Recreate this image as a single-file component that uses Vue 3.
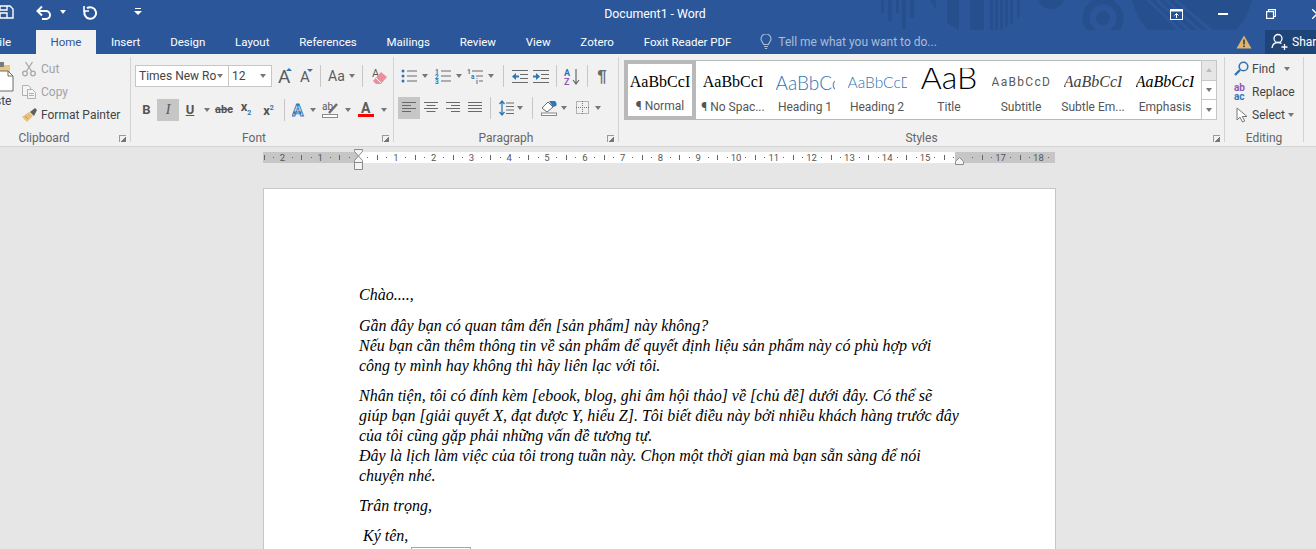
<script setup>
const tabs = ['Insert', 'Design', 'Layout', 'References', 'Mailings', 'Review', 'View', 'Zotero', 'Foxit Reader PDF'];

const gallery = [
  { cls: 's-normal', sample: 'AaBbCcI', label: '¶ Normal' },
  { cls: 's-normal', sample: 'AaBbCcI', label: '¶ No Spac...' },
  { cls: 's-h1', sample: 'AaBbCc', label: 'Heading 1' },
  { cls: 's-h2', sample: 'AaBbCcD', label: 'Heading 2' },
  { cls: 's-title', sample: 'AaB', label: 'Title' },
  { cls: 's-sub', sample: 'AaBbCcD', label: 'Subtitle' },
  { cls: 's-subtle', sample: 'AaBbCcI', label: 'Subtle Em...' },
  { cls: 's-emph', sample: 'AaBbCcI', label: 'Emphasis' },
];

const stripes = [130, 135, 140, 145, 150, 157];

const CM = 37.8;
const ZERO = 95; // ruler zero, from the ruler's left edge
const rulerNums = [];
const rulerTicks = [];
const rulerDots = [];
for (let n = -2; n <= 18; n++) {
  if (n !== 0 && n !== 16) rulerNums.push({ n: Math.abs(n), x: ZERO + n * CM });
}
for (let q = -10; q <= 74; q++) {
  if (q % 4 === 0) continue;
  const x = ZERO + (q * CM) / 4;
  if (x < 0 || x > 790) continue;
  if (q % 2 === 0) rulerTicks.push(x);
  else rulerDots.push(x);
}
</script>

<template>
  <div class="word">
    <div class="titlebar">
      <svg class="pattern" width="400" height="54" viewBox="0 0 400 54" fill="none">
        <defs>
          <clipPath id="arc"><circle cx="120" cy="-20" r="54" /></clipPath>
          <clipPath id="inner"><circle cx="332" cy="-12" r="47" /></clipPath>
        </defs>
        <g fill="#264f8d">
          <rect x="21" y="0" width="3" height="13" />
          <rect x="28" y="0" width="4" height="21" />
          <rect x="36" y="0" width="3" height="13" />
          <rect x="42" y="0" width="4" height="29" />
          <rect x="50" y="0" width="4" height="18" />
          <path d="M70 0h6v10z" />
          <g clip-path="url(#arc)">
            <rect x="87" y="0" width="12" height="40" />
            <rect x="110" y="0" width="14" height="40" />
            <rect v-for="x in stripes" :key="x" :x="x" y="0" width="3" height="40" />
          </g>
          <circle cx="191" cy="-5" r="14" />
          <circle cx="243" cy="18" r="7" />
          <circle cx="332" cy="-12" r="61" />
        </g>
        <circle cx="243" cy="18" r="17" stroke="#264f8d" stroke-width="7" />
        <g clip-path="url(#inner)" stroke="#2b579a" stroke-width="3">
          <path d="M288 0l40 38M297 0l40 38M306 0l40 36M315 0l38 32" />
        </g>
      </svg>
      <div class="qat">
        <svg class="q-save" width="14" height="14" viewBox="0 0 14 14" fill="none" stroke="#fff" stroke-width="1.4"><path d="M-6 1h16l3 3v9H-6zM7 1v4H0V1M7 13V8H0v5" /></svg>
        <svg class="q-undo" width="16" height="15" viewBox="0 0 16 15" fill="none" stroke="#fff" stroke-width="2"><path d="M2 6h8a4 4 0 0 1 0 8H6" /><path d="M6 1.500 1.500 6 6 10.500" /></svg>
        <i class="arrow white q-undo-arrow"></i>
        <svg class="q-redo" width="14" height="15" viewBox="0 0 14 15" fill="none" stroke="#fff" stroke-width="2"><path d="M4 3.200a5.800 5.800 0 1 1-2 2.300" /><path d="M1 1v5h5" stroke-width="1.600" /></svg>
        <svg class="q-more" width="8" height="8" viewBox="0 0 8 8" fill="#fff"><rect x="1" y="0" width="6" height="1" /><path d="M0 3h8L4 7z" /></svg>
      </div>
      <div class="doc-title">Document1 - Word</div>
      <div class="win-btns">
        <svg width="13" height="11" viewBox="0 0 13 11" fill="none" stroke="#fff"><rect x="0.500" y="0.500" width="12" height="10" /><rect x="0" y="0" width="13" height="2.500" fill="#fff" stroke="none" /><path d="M6.500 9V4.500M4.500 6.500l2-2 2 2" /></svg>
        <svg class="w-min" width="10" height="2" viewBox="0 0 10 2"><rect width="10" height="2" fill="#fff" /></svg>
        <svg class="w-max" width="10" height="10" viewBox="0 0 10 10" fill="none" stroke="#fff" stroke-width="1.200"><path d="M2.500 2.500V.6h6.900v6.900H7.500" /><rect x="0.600" y="2.600" width="6.900" height="6.800" /></svg>
        <svg class="w-close" width="10" height="10" viewBox="0 0 10 10" stroke="#fff" stroke-width="1.300"><path d="M0 0l10 10M10 0L0 10" /></svg>
      </div>
    </div>

    <div class="tabrow">
      <div class="tab file">File</div>
      <div class="tab active">Home</div>
      <div v-for="t in tabs" :key="t" class="tab">{{ t }}</div>
      <div class="tell">
        <svg width="12" height="16" viewBox="0 0 12 16" fill="none" stroke="#a9bcd8" stroke-width="1.100"><path d="M3.500 10.500C3.500 8.500 1 7.500 1 5a5 5 0 0 1 10 0c0 2.500-2.500 3.500-2.500 5.500zM4 12.500h4M4.800 14.500h2.400" /></svg>
        <span>Tell me what you want to do...</span>
      </div>
      <svg class="warn" width="16" height="14" viewBox="0 0 16 14"><path d="M8 0.500 15.500 13.500H.5z" fill="#e0b469" /><rect x="7.200" y="4.500" width="1.600" height="5" fill="#3c3c3c" /><rect x="7.200" y="10.500" width="1.600" height="1.600" fill="#3c3c3c" /></svg>
      <div class="share">
        <svg width="18" height="18" viewBox="0 0 18 18" fill="none" stroke="#fff" stroke-width="1.300"><circle cx="7" cy="5.500" r="4" /><path d="M1 15c.5-4 3-5.500 6-5.500 1.500 0 2.500.3 3.500 1" /><path d="M13.500 11v6M10.500 14h6" /></svg>
        <span>Share</span>
      </div>
    </div>

    <div class="ribbon">
      <section class="group g-clip">
        <div class="paste">
          <svg width="14" height="31" viewBox="0 0 14 31"><rect x="-6" y="3" width="16" height="9" fill="#e8c582" /><rect x="-2" y="0" width="6" height="5" fill="#7a7a7a" /><path d="M-4 9h12l5 5v15H-4z" fill="#fff" stroke="#6d6d6d" /><path d="M8 9v5h5" fill="none" stroke="#6d6d6d" /></svg>
          <span>ste</span>
        </div>
        <div class="clip-list">
          <div class="clip-item off">
            <svg width="14" height="16" viewBox="0 0 14 16" fill="none" stroke="#a8a8a8" stroke-width="1.300"><circle cx="3" cy="12.500" r="2.300" /><circle cx="11" cy="12.500" r="2.300" /><path d="M4.200 10.500 10.500 1M9.800 10.500 3.500 1" /></svg>
            <span>Cut</span>
          </div>
          <div class="clip-item off">
            <svg width="14" height="14" viewBox="0 0 14 14" fill="#f4f4f4" stroke="#b0b0b0"><path d="M.5.500h6l2 2v8h-8z" /><path d="M5.500 4.500h5l3 3v6h-8z" /><path d="M7 8.500h5M7 10.500h5" /></svg>
            <span>Copy</span>
          </div>
          <div class="clip-item painter">
            <svg width="16" height="14" viewBox="0 0 16 14"><path d="M0 9 7 4l4 4-6 6z" fill="#e7c17c" /><path d="M8 4l5-4 2 2-3 6z" fill="#5f5f5f" /><path d="M3 8l3 3" stroke="#c89b4e" /></svg>
            <span>Format Painter</span>
          </div>
        </div>
        <div class="group-name">Clipboard</div>
        <i class="launcher"></i>
      </section>

      <section class="group g-font">
        <div class="font-row1">
          <div class="combo"><span>Times New Ro</span><i class="arrow"></i></div>
          <div class="combo font-size"><span>12</span><i class="arrow"></i></div>
          <svg width="14" height="16" viewBox="0 0 14 16"><text x="0" y="15" class="glyph big">A</text><path d="M8 3h6l-3-3z" fill="#2f76b5" /></svg>
          <svg width="13" height="14" viewBox="0 0 13 14"><text x="0" y="13" class="glyph mid">A</text><path d="M7 0h6l-3 3z" fill="#2f76b5" /></svg>
          <b class="sep"></b>
          <div class="aa"><span>Aa</span><i class="arrow"></i></div>
          <b class="sep"></b>
          <svg width="15" height="16" viewBox="0 0 15 16"><text x="0" y="9" class="glyph small">A</text><path d="M1 13l8-9 6 5-6 7H4z" fill="#ee8d9c" /><path d="M4 10l5 5" stroke="#fff" /></svg>
        </div>
        <div class="font-row2">
          <span class="fmt bold">B</span>
          <span class="fmt ital on">I</span>
          <span class="fmt under">U</span>
          <i class="arrow"></i>
          <span class="fmt strike">abc</span>
          <span class="fmt script">x<sub>2</sub></span>
          <span class="fmt script">x<sup>2</sup></span>
          <b class="sep"></b>
          <svg width="14" height="16" viewBox="0 0 14 16"><text x="0" y="14" class="glyph effect">A</text></svg>
          <i class="arrow"></i>
          <svg width="17" height="16" viewBox="0 0 17 16" fill="none"><text x="0" y="8" class="glyph tiny">ab</text><path d="M7 11 15 2" stroke="#6d6d6d" stroke-width="2.500" /><rect x="0.500" y="12.500" width="15" height="3" stroke="#8a8a8a" fill="#fff" /></svg>
          <i class="arrow"></i>
          <svg width="16" height="16" viewBox="0 0 16 16"><text x="3" y="11" class="glyph color">A</text><rect x="0" y="12" width="16" height="3" fill="#f00" /></svg>
          <i class="arrow"></i>
        </div>
        <div class="group-name">Font</div>
        <i class="launcher"></i>
      </section>

      <section class="group g-para">
        <div class="para-row1">
          <svg width="16" height="14" viewBox="0 0 16 14"><g fill="#2f76b5"><circle cx="2" cy="2" r="1.500" /><circle cx="2" cy="7" r="1.500" /><circle cx="2" cy="12" r="1.500" /></g><path d="M6 2h10M6 7h10M6 12h10" stroke="#6a6a6a" /></svg>
          <i class="arrow"></i>
          <svg width="16" height="15" viewBox="0 0 16 15"><g class="glyph num"><text x="0" y="5">1</text><text x="0" y="10">2</text><text x="0" y="15">3</text></g><path d="M6 2h10M6 7h10M6 12h10" stroke="#6a6a6a" /></svg>
          <i class="arrow"></i>
          <svg width="16" height="15" viewBox="0 0 16 15"><g class="glyph num"><text x="0" y="5">1</text><text x="4" y="10">a</text><text x="9" y="15">i</text></g><path d="M5 2h11M9 7h7M12 12h4" stroke="#6a6a6a" /></svg>
          <i class="arrow"></i>
          <b class="sep"></b>
          <svg width="16" height="13" viewBox="0 0 16 13"><path d="M0 .5h16M8 4.500h8M8 8.500h8M0 12.500h16" stroke="#6a6a6a" /><path d="M0 6.500 4 3v7z" fill="#2f76b5" /><path d="M3 6.500h4" stroke="#2f76b5" stroke-width="2" /></svg>
          <svg width="16" height="13" viewBox="0 0 16 13"><path d="M0 .5h16M8 4.500h8M8 8.500h8M0 12.500h16" stroke="#6a6a6a" /><path d="M7 6.500 3 3v7z" fill="#2f76b5" /><path d="M0 6.500h4" stroke="#2f76b5" stroke-width="2" /></svg>
          <b class="sep"></b>
          <svg width="16" height="17" viewBox="0 0 16 17"><text x="0" y="8" class="glyph az a">A</text><text x="0" y="16.500" class="glyph az z">Z</text><path d="M12 1v14M9 12l3 4 3-4" fill="none" stroke="#6a6a6a" stroke-width="1.200" /></svg>
          <b class="sep"></b>
          <span class="pilcrow">¶</span>
        </div>
        <div class="para-row2">
          <span class="align on"><svg width="14" height="11" viewBox="0 0 14 11"><path d="M0 .5h14M0 3.500h9M0 6.500h14M0 9.500h9" stroke="#6a6a6a" /></svg></span>
          <span class="align"><svg width="14" height="11" viewBox="0 0 14 11"><path d="M0 .5h14M2.500 3.500h9M0 6.500h14M2.500 9.500h9" stroke="#6a6a6a" /></svg></span>
          <span class="align"><svg width="14" height="11" viewBox="0 0 14 11"><path d="M0 .5h14M5 3.500h9M0 6.500h14M5 9.500h9" stroke="#6a6a6a" /></svg></span>
          <span class="align"><svg width="14" height="11" viewBox="0 0 14 11"><path d="M0 .5h14M0 3.500h14M0 6.500h14M0 9.500h14" stroke="#6a6a6a" /></svg></span>
          <b class="sep"></b>
          <svg width="15" height="16" viewBox="0 0 15 16"><path d="M7 3h8M7 6.500h8M7 10h8M7 13.500h8" stroke="#6a6a6a" /><path d="M3 1v14M.5 4 3 1l2.500 3M.5 12 3 15l2.500-3" fill="none" stroke="#2f76b5" stroke-width="1.300" /></svg>
          <i class="arrow"></i>
          <b class="sep"></b>
          <svg width="17" height="16" viewBox="0 0 17 16"><path d="M1 8l6-6 5 5-6 5z" fill="#fff" stroke="#6a6a6a" /><path d="M8 1h6c2 2 2 4 1 5l-3 1z" fill="#2f76b5" /><rect x="0.500" y="13" width="15" height="2.500" fill="#fff" stroke="#8a8a8a" /></svg>
          <i class="arrow"></i>
          <svg width="13" height="13" viewBox="0 0 13 13" fill="none" stroke="#777" stroke-dasharray="1 1"><rect x="0.500" y="0.500" width="12" height="12" /><path d="M6.500 0v13M0 6.500h13" /></svg>
          <i class="arrow"></i>
        </div>
        <div class="group-name">Paragraph</div>
        <i class="launcher"></i>
      </section>

      <section class="group g-styles">
        <div class="gallery">
          <div v-for="(s, i) in gallery" :key="s.label" class="style-cell" :class="{ selected: i === 0 }">
            <div class="sample" :class="s.cls"><span>{{ s.sample }}</span></div>
            <div class="style-label">{{ s.label }}</div>
          </div>
          <div class="gallery-scroll">
            <span class="up"><i class="arrow up-arrow"></i></span>
            <span><i class="arrow"></i></span>
            <span class="more"><i class="arrow"></i></span>
          </div>
        </div>
        <div class="group-name">Styles</div>
        <i class="launcher"></i>
      </section>

      <section class="group g-edit">
        <div class="edit-list">
          <div class="edit-item">
            <svg width="15" height="15" viewBox="0 0 15 15" fill="none" stroke="#2f76b5" stroke-width="1.600"><circle cx="9.500" cy="5.500" r="4.300" /><path d="M6 9l-5 5" stroke-width="2.400" /></svg>
            <span>Find</span><i class="arrow find-arrow"></i>
          </div>
          <div class="edit-item">
            <span class="abac"><em>ab</em><em>ac</em></span>
            <span>Replace</span>
          </div>
          <div class="edit-item select">
            <svg width="12" height="16" viewBox="0 0 12 16" fill="#fff" stroke="#777"><path d="M1 1v12l3-2.800L6.500 15l2.200-1L6.300 9.500H11z" /></svg>
            <span>Select</span><i class="arrow"></i>
          </div>
        </div>
        <div class="group-name">Editing</div>
      </section>
    </div>

    <div class="workspace">
      <div class="ruler">
        <div class="ruler-margin left"></div>
        <div class="ruler-margin right"></div>
        <span v-for="r in rulerNums" :key="r.x" class="r-num" :style="{ left: r.x + 'px' }">{{ r.n }}</span>
        <i v-for="x in rulerTicks" :key="x" class="r-tick" :style="{ left: x + 'px' }"></i>
        <i v-for="x in rulerDots" :key="x" class="r-dot" :style="{ left: x + 'px' }"></i>
        <svg class="indent-left" width="10" height="22" viewBox="0 0 10 22" fill="#f4f4f4" stroke="#8a8a8a"><path d="M.5.500h8v2L4.500 7 .5 2.500zM.5 11.500 4.500 7l4 4.500v2h-8zM.5 13.500h8v7h-8z" /></svg>
        <svg class="indent-right" width="10" height="8" viewBox="0 0 10 8" fill="#f4f4f4" stroke="#8a8a8a"><path d="M4.500 .5l4 4v3h-8v-3z" /></svg>
      </div>
      <div class="page">
        <p>Chào....,</p>
        <p>
          Gần đây bạn có quan tâm đến [sản phẩm] này không?<br />
          Nếu bạn cần thêm thông tin về sản phẩm để quyết định liệu sản phẩm này có phù hợp với<br />
          công ty mình hay không thì hãy liên lạc với tôi.
        </p>
        <p>
          Nhân tiện, tôi có đính kèm [ebook, blog, ghi âm hội thảo] về [chủ đề] dưới đây. Có thể sẽ<br />
          giúp bạn [giải quyết X, đạt được Y, hiểu Z]. Tôi biết điều này bởi nhiều khách hàng trước đây<br />
          của tôi cũng gặp phải những vấn đề tương tự.<br />
          Đây là lịch làm việc của tôi trong tuần này. Chọn một thời gian mà bạn sẵn sàng để nói<br />
          chuyện nhé.
        </p>
        <p>Trân trọng,</p>
        <p class="sign">Ký tên,<span class="control"></span></p>
      </div>
    </div>
  </div>
</template>

<style scoped>
.word {
  width: 1316px;
  height: 549px;
  overflow: hidden;
  display: flex;
  flex-direction: column;
  background: #e6e6e6;
  font-family: Roboto, 'Noto Sans', sans-serif;
  font-size: 12px;
  color: #444;
  position: relative;
}

/* title bar */
.titlebar {
  height: 30px;
  flex: none;
  background: #2b579a;
  display: grid;
  grid-template-columns: 1fr auto 1fr;
  align-items: center;
  color: #fff;
  position: relative;
}
.pattern {
  position: absolute;
  left: 860px;
  top: 0;
}
.qat {
  display: flex;
  align-items: center;
  position: relative;
  height: 24px;
  padding-bottom: 6px;
}
.q-undo { margin-left: 22px; }
.q-undo-arrow { margin-left: 8px; }
.q-redo { margin-left: 17px; }
.q-more { margin-left: 37px; }
.doc-title {
  font-size: 12.300px;
  padding-right: 6px;
  padding-bottom: 2px;
  position: relative;
}
.win-btns {
  display: flex;
  align-items: center;
  justify-content: flex-end;
  position: relative;
  padding-bottom: 2px;
  margin-right: -6px;
}
.w-min { margin-left: 35px; }
.w-max { margin-left: 38px; }
.w-close { margin-left: 36px; }

/* tabs */
.tabrow {
  height: 24px;
  flex: none;
  display: flex;
  align-items: stretch;
  color: #fff;
  position: relative;
  margin-left: -16px;
  width: 1332px;
  background: #2b579a;
}
.tab {
  padding: 0 14.900px;
  line-height: 24px;
  font-size: 11.500px;
  white-space: nowrap;
}
.tab.file {
  width: 52px;
  box-sizing: border-box;
  padding: 0 0 0 9px;
}
.tab.active {
  background: #f1f1f1;
  color: #2b579a;
  width: 60px;
  box-sizing: border-box;
  text-align: center;
  padding: 0;
}
.tell {
  display: flex;
  align-items: center;
  gap: 6px;
  color: #a9bcd8;
  margin-left: 14px;
  flex: 1;
}
.warn {
  align-self: center;
  margin-right: 13px;
}
.share {
  width: 51px;
  background: #1f4478;
  display: flex;
  align-items: center;
  gap: 3px;
  padding-left: 6px;
  box-sizing: border-box;
  overflow: hidden;
  flex: none;
}
.share svg { flex: none; }

/* ribbon */
.ribbon {
  height: 92px;
  flex: none;
  background: #f1f1f1;
  border-bottom: 1px solid #d4d4d4;
  display: flex;
}
.group {
  position: relative;
  border-right: 1px solid #d2d2d2;
  margin: 3px 0 4px;
  box-sizing: border-box;
  flex: none;
}
.group-name {
  position: absolute;
  left: 0;
  right: 0;
  bottom: -4px;
  height: 16px;
  line-height: 16px;
  text-align: center;
  color: #666;
  font-size: 12px;
}
.g-clip .group-name { right: 42px; }
.g-font .group-name { right: 16px; }
.launcher {
  position: absolute;
  right: 4px;
  bottom: 0;
  width: 7px;
  height: 7px;
  border-left: 1px solid #9a9a9a;
  border-top: 1px solid #9a9a9a;
  box-sizing: border-box;
  background: linear-gradient(135deg, transparent 55%, #777 55%);
}
.g-clip { width: 131px; display: flex; }
.g-font { width: 263px; }
.g-para { width: 225px; }
.g-styles { width: 606px; }
.g-edit { width: 79px; }

.arrow {
  display: inline-block;
  width: 0;
  height: 0;
  border-left: 3.500px solid transparent;
  border-right: 3.500px solid transparent;
  border-top: 4px solid #777;
  flex: none;
}
.arrow.white { border-top-color: #fff; }
.sep {
  display: block;
  width: 1px;
  height: 22px;
  background: #c6c6c6;
}
.glyph { font-family: Roboto, sans-serif; fill: #5c5c5c; }
.big { font-size: 19px; }
.mid { font-size: 15px; }
.small { font-size: 11px; }
.effect { font-size: 17px; font-weight: 700; fill: #dfeaf6; stroke: #2f76b5; stroke-width: .9; }
.tiny { font-size: 10px; }
.color { font-size: 14px; font-weight: 700; }
.az { font-size: 9px; font-weight: 700; }
.az.a { fill: #2f76b5; }
.az.z { fill: #8e5bb5; }
.num { font-size: 6.500px; font-weight: 700; fill: #2f76b5; }

/* clipboard */
.paste {
  width: 18px;
  padding-top: 5px;
  flex: none;
  display: flex;
  flex-direction: column;
}
.paste span {
  margin-left: -5px;
  margin-top: 1px;
}
.clip-list { margin-left: 4px; }
.clip-item {
  display: flex;
  align-items: center;
  height: 23px;
  gap: 5px;
  white-space: nowrap;
}
.clip-item.off { color: #a2a2a2; }
.clip-item.painter { gap: 3px; }
.clip-item svg { flex: none; }

/* font */
.font-row1 {
  display: grid;
  grid-template-columns: 94px 43px 25px 18px 10px 30px 14px 20px;
  align-items: center;
  justify-items: center;
  margin: 6px 0 0 4px;
  height: 26px;
}
.combo {
  height: 22px;
  justify-self: stretch;
  background: #fff;
  border: 1px solid #c6c6c6;
  box-sizing: border-box;
  display: flex;
  align-items: center;
  justify-content: space-between;
  padding: 0 5px 0 3px;
  white-space: nowrap;
  overflow: hidden;
}
.font-size { margin-left: -1px; }
.aa {
  display: flex;
  align-items: center;
  justify-self: start;
  margin-left: 3px;
  gap: 4px;
  font-size: 14px;
  color: #5c5c5c;
}
.font-row2 {
  display: grid;
  grid-template-columns: 21px 22px 22px 12px 22px 22px 23px 8px 22px 6px 29px 6px 30px 6px;
  align-items: center;
  justify-items: center;
  margin: 7px 0 0 5px;
  height: 23px;
}
.fmt { color: #555; font-size: 13px; line-height: 22px; }
.bold { font-weight: 700; }
.ital {
  font-style: italic;
  width: 22px;
  text-align: center;
  font-family: 'Liberation Serif', serif;
  font-size: 14px;
}
.on { background: #c6c6c6; }
.under { font-weight: 700; text-decoration: underline; }
.strike { text-decoration: line-through; font-size: 11px; font-weight: 700; }
.script { font-weight: 700; font-size: 13px; }
.script sub, .script sup { font-size: 7px; color: #2f76b5; }

/* paragraph */
.para-row1 {
  display: grid;
  grid-template-columns: 21px 12px 24px 8px 24px 8px 16px 17px 26px 4px 28px 2px 28px;
  align-items: center;
  justify-items: center;
  margin: 6px 0 0 4px;
  height: 26px;
}
.para-row2 {
  display: grid;
  grid-template-columns: 22px 22px 22px 22px 8px 24px 4px 20px 14px 16px 20px 12px;
  align-items: center;
  justify-items: center;
  margin: 7px 0 0 4px;
  height: 23px;
}
.align {
  width: 22px;
  height: 22px;
  display: flex;
  align-items: center;
  justify-content: center;
}
.pilcrow {
  font-family: 'Liberation Sans', sans-serif;
  font-size: 17px;
  font-weight: 700;
  color: #6a6a6a;
  line-height: 1;
}

/* styles */
.g-styles { padding: 3px 0 0 5px; }
.gallery {
  width: 593px;
  height: 60px;
  box-sizing: border-box;
  border: 1px solid #b9b9b9;
  background: #fff;
  display: flex;
}
.style-cell {
  width: 72px;
  flex: none;
  box-sizing: border-box;
  text-align: center;
  overflow: hidden;
  white-space: nowrap;
  padding: 0 4px;
}
.style-cell.selected {
  border: 4px solid #b9b9b9;
  margin: -1px 0 -1px -1px;
  padding: 0;
  height: 60px;
}
.style-cell.selected + .style-cell { margin-left: 1px; }
.sample {
  height: 38px;
  box-sizing: border-box;
  padding-top: 4px;
  display: flex;
  align-items: center;
  justify-content: center;
  overflow: hidden;
  color: #000;
  font-family: 'Liberation Serif', serif;
  font-size: 16px;
}
.selected .sample { height: 34px; padding-top: 2px; }
.sample span { white-space: nowrap; display: block; overflow: hidden; }
.s-h1, .s-h2 { font-family: Lato, sans-serif; font-weight: 300; color: #2e74b5; }
.s-h1 { font-size: 19px; }
.s-h2 { font-size: 15.500px; }
.s-h1 span, .s-h2 span { width: 59px; text-align: left; }
.s-title { font-family: Lato, sans-serif; font-weight: 300; font-size: 32px; align-items: flex-start; padding-top: 7px; }
.s-title span { height: 21px; line-height: 17px; }
.s-sub { font-family: Roboto, sans-serif; font-size: 12px; letter-spacing: 1.300px; color: #5a5a5a; }
.s-sub span { width: 59px; text-align: left; }
.s-subtle { font-style: italic; color: #404040; }
.s-emph { font-style: italic; }
.style-label {
  color: #555;
  font-size: 12px;
  line-height: 17px;
}
.gallery-scroll {
  width: 14px;
  margin: -1px -1px -1px auto;
  flex: none;
  display: flex;
  flex-direction: column;
  border: 1px solid #c6c6c6;
}
.gallery-scroll span {
  flex: 1;
  display: flex;
  align-items: center;
  justify-content: center;
  border-bottom: 1px solid #c6c6c6;
}
.gallery-scroll .up { background: #e6e6e6; }
.up-arrow { transform: rotate(180deg); border-top-color: #bbb; }
.gallery-scroll .more { border-bottom: 0; }

/* editing */
.edit-list { padding: 0 0 0 9px; }
.edit-item {
  display: flex;
  align-items: center;
  height: 23px;
  gap: 3px;
  white-space: nowrap;
}
.edit-item svg { flex: none; }
.find-arrow { margin-left: 6px; }
.select { padding-left: 2px; gap: 4px; }
.select .arrow { margin-left: -1px; }
.abac {
  width: 15px;
  display: flex;
  flex-direction: column;
  font-size: 10px;
  line-height: 9px;
  font-weight: 700;
}
.abac em { font-style: normal; color: #8e5bb5; }
.abac em + em { color: #2f76b5; }

/* ruler and document */
.workspace {
  flex: 1;
  min-height: 0;
  display: flex;
  flex-direction: column;
  align-items: flex-start;
  padding-left: 263px;
}
.ruler {
  position: relative;
  margin-top: 5px;
  width: 792px;
  height: 11px;
  background: #fff;
  flex: none;
  color: #555;
  font-size: 9.500px;
}
.ruler-margin {
  position: absolute;
  top: 0;
  bottom: 0;
  background: #c6c6c6;
}
.ruler-margin.left { left: 0; width: 95px; }
.ruler-margin.right { right: 0; width: 100px; }
.r-num {
  position: absolute;
  top: 0;
  line-height: 11px;
  transform: translateX(-50%);
}
.r-tick {
  position: absolute;
  top: 3px;
  width: 1px;
  height: 5px;
  background: #666;
}
.r-dot {
  position: absolute;
  top: 5px;
  width: 1px;
  height: 1px;
  background: #666;
}
.indent-left {
  position: absolute;
  left: 91px;
  top: -3px;
}
.indent-right {
  position: absolute;
  left: 692px;
  top: 5px;
}
.page {
  margin-top: 25px;
  width: 793px;
  flex: 1;
  box-sizing: border-box;
  background: #fff;
  border: 1px solid #c6c6c6;
  padding: 96px 0 0 95px;
  font-family: 'Liberation Serif', serif;
  font-style: italic;
  font-size: 16px;
  line-height: 20px;
  color: #000;
  white-space: nowrap;
}
.page p { margin: 0 0 10px; }
.page p:first-child { margin-bottom: 11px; }
.sign { padding-left: 4px; }
.control {
  display: inline-block;
  width: 58px;
  height: 20px;
  border: 1px solid #a8a8a8;
  margin-left: 3px;
  vertical-align: -28px;
}
</style>

<style>
html, body { margin: 0; overflow: hidden; }
</style>
